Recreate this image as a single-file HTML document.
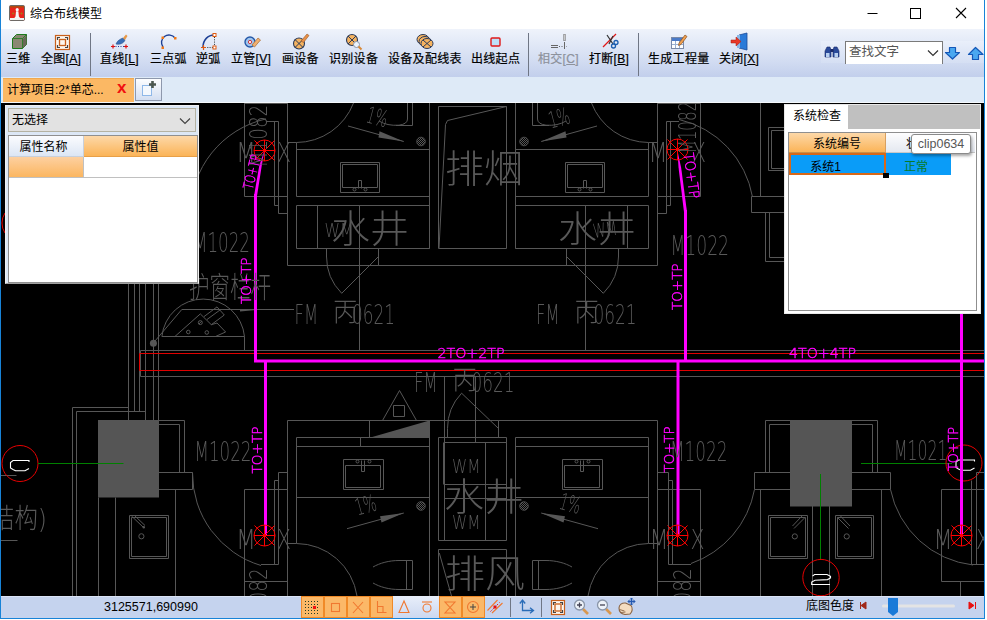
<!DOCTYPE html>
<html lang="zh-CN">
<head>
<meta charset="utf-8">
<title>综合布线模型</title>
<style>
html,body{margin:0;padding:0;background:#fff;}
body{width:987px;height:620px;position:relative;overflow:hidden;font-family:"Liberation Sans","Noto Sans CJK SC",sans-serif;font-size:12px;color:#000;}
.abs{position:absolute;}
#win{position:absolute;left:0;top:0;width:983px;height:618px;border-left:1px solid #1883d7;border-right:1px solid #1883d7;border-bottom:1px solid #1883d7;background:#fff;overflow:hidden;}
#title{position:absolute;left:0;top:0;width:983px;height:28px;background:#fff;}
#title .t{position:absolute;left:29px;top:6px;font-size:12px;line-height:16px;color:#000;}
#toolbar{position:absolute;left:0;top:29px;width:983px;height:48px;background:linear-gradient(#eff3fb 0%,#e2e9f7 30%,#d3ddf2 65%,#c2cfec 100%);}
.tb{position:absolute;top:52px;font-size:12px;line-height:14px;white-space:nowrap;color:#000;letter-spacing:.3px;-webkit-text-stroke:.2px currentColor;margin-left:-1px;}
.tb u{text-decoration:underline;}
.sep{position:absolute;top:33px;width:1px;height:43px;background:#6f7685;}
#tabs{position:absolute;left:0;top:77px;width:983px;height:26px;background:#deeaf7;box-shadow:inset 0 -1px 0 #f4f8fc;}
#canvas{position:absolute;left:0;top:103px;width:983px;height:493px;background:#000;overflow:hidden;}
#status{position:absolute;left:0;top:596px;width:983px;height:22px;background:#c5d3ee;box-shadow:inset 0 1px 0 #dbe4f7;}

.srch{position:absolute;left:820px;top:12px;width:163px;height:22px;background:linear-gradient(#e9effa,#d5dff3);}
.combo{position:absolute;left:844px;top:41px;width:96px;height:22px;border:1px solid #7a7a7a;border-bottom:none;background:#fff;}
.combo span{position:absolute;left:3px;top:2px;font-size:12.500px;line-height:16px;color:#555;}
.combo svg{position:absolute;right:3px;top:7px;}

.tab1{position:absolute;left:2px;top:1px;width:131px;height:24px;background:#fbb864;border-top:1px solid #f0a850;box-sizing:border-box;}
.tab1 span{position:absolute;left:4px;top:3px;font-size:12px;line-height:17px;white-space:nowrap;}
.tab1 b{position:absolute;left:114px;top:0px;font-size:17px;line-height:18px;color:#f01010;font-weight:bold;}
.tab2{position:absolute;left:134px;top:1px;width:27px;height:23px;box-sizing:border-box;border:1px solid #8e98ac;background:linear-gradient(#fdfeff,#d3def1);}
.tab2 svg{position:absolute;left:5px;top:2px;}
#prop{position:absolute;left:4px;top:105px;width:194px;height:179px;background:#dce7f5;box-sizing:border-box;border:1px solid #f0f0f0;border-bottom-color:#a0a0a0;}
.pcombo{position:absolute;left:2px;top:2px;width:188px;height:24px;box-sizing:border-box;border:1px solid #b4b2a2;background:#e2e2e2;}
.pcombo span{position:absolute;left:3px;top:3px;font-size:12px;line-height:16px;}
.pcombo svg{position:absolute;right:4px;top:8px;}
.pgrid{position:absolute;left:2px;top:29px;width:190px;height:148px;box-sizing:border-box;border:1px solid #8f8f8f;background:#fff;}
.ph1,.ph2,.pr1,.pr2{position:absolute;box-sizing:border-box;text-align:center;font-size:12px;line-height:23px;}
.ph1{left:0;top:0;width:75px;height:21px;text-indent:-5px;background:linear-gradient(#fbfcfe,#dce6f4);border-right:1px solid #c8d0dc;border-bottom:1px solid #c8d0dc;}
.ph2{left:75px;top:0;width:113px;height:21px;background:linear-gradient(#fdd8a8,#fbb458);border-bottom:1px solid #e8a048;}
.pr1{left:0;top:21px;width:75px;height:21px;background:linear-gradient(#fdd0a0,#fbb660);border-right:1px solid #c0c0c0;border-bottom:1px solid #c0c0c0;}
.pr2{left:75px;top:21px;width:113px;height:21px;background:#fff;border-bottom:1px solid #c0c0c0;}
#sys{position:absolute;left:783px;top:104px;width:197px;height:210px;background:#fff;box-sizing:border-box;border:1px solid #e8e8e8;}
.stab{position:absolute;left:0;top:0;width:63px;height:24px;background:#fff;font-size:12px;line-height:22px;text-indent:8px;}
#sys:before{content:"";position:absolute;left:63px;top:0;width:132px;height:24px;background:#c0c0c0;}
.sgrid{position:absolute;left:3px;top:27px;width:189px;height:179px;box-sizing:border-box;border:1px solid #8f8f8f;background:#fff;}
.sh1,.sh2,.sr1,.sr2{position:absolute;box-sizing:border-box;text-align:center;font-size:12px;line-height:22px;}
.sh1{left:0;top:0;width:97px;height:20px;background:linear-gradient(#fdd8a8,#fbb458);border-right:1px solid #d8a060;border-bottom:1px solid #c89048;}
.sh2{left:97px;top:0;width:89px;height:20px;background:linear-gradient(#fdfdfe,#e4e8f0);border-bottom:1px solid #c8c8c8;text-align:left;text-indent:20px;}
.sr1{left:0;top:20px;width:97px;height:22px;background:#0a9cf8;border:2px solid #d86818;line-height:24px;text-indent:-24px;}
.sr2{left:97px;top:20px;width:65px;height:22px;background:#0a9cf8;color:#0a7a28;line-height:28px;text-indent:-5px;}
.sdot{position:absolute;left:94px;top:40px;width:6px;height:5px;background:#000;}
.tip{position:absolute;left:126px;top:29px;width:60px;height:20px;box-sizing:border-box;border:1px solid #8a8a8a;border-radius:3px;background:#fff;font-size:12.500px;line-height:18px;text-align:center;color:#575757;box-shadow:1px 2px 3px rgba(0,0,0,.35);}

.coord{position:absolute;left:103px;top:3px;font-size:12.500px;line-height:16px;}
.dim{position:absolute;left:805px;top:2px;font-size:12px;line-height:16px;}
.ob{position:absolute;top:0;width:23px;height:22px;box-sizing:border-box;background:#fbb868;border:1px solid #f08a28;}
.hl{position:absolute;top:0;width:46px;height:22px;background:linear-gradient(#e8eefa,#ccd8f0);}

.ct{opacity:.999;}
.ct text{font-family:"DejaVu Sans","Noto Sans CJK SC",sans-serif;font-weight:200;fill:#5a5a5a;}
.mt text{font-family:"DejaVu Sans","Liberation Sans",sans-serif;font-weight:200;font-size:14px;fill:#ff00ff;stroke:#ff00ff;stroke-width:.45px;}
</style>
</head>
<body>
<div id="win">
  <div id="title"><div class="t">综合布线模型</div></div>

  <div id="toolbar">
    <div class="srch"></div>
  </div>
  <!-- toolbar labels -->
  <div class="tb" style="left:6px">三维</div>
  <div class="tb" style="left:41px">全图[<u>A</u>]</div>
  <div class="sep" style="left:89px"></div>
  <div class="tb" style="left:100px">直线[<u>L</u>]</div>
  <div class="tb" style="left:150px">三点弧</div>
  <div class="tb" style="left:196px">逆弧</div>
  <div class="tb" style="left:231px">立管[<u>V</u>]</div>
  <div class="tb" style="left:282px">画设备</div>
  <div class="tb" style="left:329px">识别设备</div>
  <div class="tb" style="left:388px">设备及配线表</div>
  <div class="tb" style="left:471px">出线起点</div>
  <div class="sep" style="left:527px"></div>
  <div class="tb" style="left:538px;color:#8d929c">相交[<u>C</u>]</div>
  <div class="tb" style="left:589px">打断[<u>B</u>]</div>
  <div class="sep" style="left:637px"></div>
  <div class="tb" style="left:648px">生成工程量</div>
  <div class="tb" style="left:719px">关闭[<u>X</u>]</div>
  <!-- ICONS -->
  <svg class="abs" style="left:0;top:0" width="984" height="78" viewBox="1 0 984 78">
    <!-- app icon -->
    <rect x="9.500" y="5.500" width="15" height="15" rx="1.300" fill="#e8241c" stroke="#6e6a66"/>
    <rect x="10" y="6" width="14" height="1.600" fill="#b04a10"/>
    <rect x="10" y="18" width="14" height="2" fill="#f2f2f2"/>
    <circle cx="17.200" cy="9.700" r="1.600" fill="#f6f6fa"/>
    <path d="M16 11.300h2.400l.5 5.200 1.200 1.500h-5.800l1.200-1.500z" fill="#f6f6fa"/>
    <path d="M12 13.500h2.400M13.200 12.300v2.400M20.300 13.500h2.400M21.500 12.300v2.400" stroke="#a8781c" stroke-width=".8"/>
    <!-- window controls -->
    <path d="M867.500 13.500h10" stroke="#000" fill="none"/>
    <rect x="910.500" y="8.500" width="10" height="10" stroke="#000" fill="none"/>
    <path d="M956 8l10 10M966 8l-10 10" stroke="#000" stroke-width="1.100" fill="none"/>
    <!-- 3D cube -->
    <path d="M12.500 38.500l4-4h10v10l-4 4h-10z" fill="#8a8873" stroke="#1c7a1c"/>
    <path d="M12.500 38.500h10v10M22.500 38.500l4-4" fill="none" stroke="#1c7a1c" stroke-width=".8"/>
    <path d="M23 39l3.500-3.500v9L23 48z" fill="#6a6858"/>
    <!-- full view -->
    <rect x="55.500" y="35.500" width="14" height="14" fill="#fdf6ee" stroke="#c8601c" stroke-width="1.200"/>
    <rect x="59.500" y="39.500" width="6" height="6" fill="none" stroke="#c8601c" stroke-width="1.300"/>
    <path d="M57.500 40v-2.500h2.500M65 37.500h2.500v2.500M67.500 45v2.500h-2.500M60 47.500h-2.500v-2.500" fill="none" stroke="#444" stroke-width="1.200"/>
    <!-- line -->
    <path d="M113 46.500h13" stroke="#2a3f9a" stroke-dasharray="1 1.500" fill="none"/>
    <path d="M111 46.500h4M113 44.500v4M124 46.500h4M126 44.500v4" stroke="#e01010" stroke-width="1.200" fill="none"/>
    <path d="M116 44c1-3 4-5 7-6l2 2c-1 3-5 5-9 4z" fill="#3a6fb8" stroke="#24508f" stroke-width=".6"/>
    <path d="M123 38l3-3.500 1.500 1.500-2.500 4z" fill="#e89a4a"/>
    <!-- 3pt arc -->
    <path d="M163 47a7.500 7.500 0 0 1 12-9" fill="none" stroke="#1c3f94" stroke-width="1.400"/>
    <rect x="174" y="37" width="2.500" height="2.500" fill="#f07818"/><rect x="161.500" y="36.500" width="2.500" height="2.500" fill="#f07818"/><rect x="161.500" y="46.500" width="2.500" height="2.500" fill="#f07818"/>
    <!-- reverse arc -->
    <path d="M203 47c0-7 5-12 11-12" fill="none" stroke="#1c3f94" stroke-width="1.500"/>
    <path d="M214.500 37v9M205 47.500h8" stroke="#333" stroke-dasharray="1 1.300" fill="none"/>
    <rect x="213" y="33.500" width="3" height="3" fill="#fff" stroke="#e05a10"/><rect x="213" y="46" width="3" height="3" fill="#fff" stroke="#e05a10"/>
    <path d="M201 47.500h5M203.500 45v5" stroke="#e05a10" stroke-width="1.200" fill="none"/>
    <!-- riser -->
    <circle cx="250" cy="42" r="5" fill="#9fc4ee" stroke="#2458a8" stroke-width="1.400"/>
    <circle cx="250" cy="42" r="1.600" fill="#fff" stroke="#d02020" stroke-width=".9"/>
    <path d="M252 45l6-7 2.500 2-6 7z" fill="#f0b070" stroke="#a86a30" stroke-width=".7"/>
    <!-- draw device -->
    <circle cx="299" cy="43.500" r="5.500" fill="#f5b360" stroke="#2a3a5a" stroke-width="1.100"/>
    <path d="M295 39.500l8 8M303 39.500l-8 8" stroke="#2a3a5a" stroke-width="1"/>
    <path d="M301 41l6-7 2 1.500-5.500 7z" fill="#e89048" stroke="#9a5a28" stroke-width=".6"/>
    <!-- identify device -->
    <circle cx="352" cy="40" r="5.500" fill="#f5b360" stroke="#2a3a5a" stroke-width="1.100"/>
    <path d="M348 36l8 8M356 36l-8 8" stroke="#2a3a5a" stroke-width="1"/>
    <circle cx="356.500" cy="44.500" r="3" fill="#eef4fb" stroke="#8a96a8" stroke-width="1"/>
    <path d="M358.500 46.500l3 3" stroke="#d88a38" stroke-width="2"/>
    <!-- device table -->
    <ellipse cx="423" cy="39.500" rx="6" ry="5" fill="#f5b360" stroke="#2a3a5a"/>
    <ellipse cx="425" cy="41.500" rx="6" ry="5" fill="#f5b360" stroke="#2a3a5a"/>
    <ellipse cx="427" cy="43.500" rx="6" ry="5" fill="#f5b360" stroke="#2a3a5a"/>
    <path d="M423 40l8 7M431 40l-8 7" stroke="#2a3a5a" stroke-width="1"/>
    <!-- outlet start -->
    <rect x="491" y="38" width="9" height="8" rx="1" fill="#bfe0f8" stroke="#e01818" stroke-width="1.400"/>
    <!-- intersect (disabled) -->
    <path d="M564.500 34v7" stroke="#777" stroke-width="2.200"/><path d="M564.500 34.500v6" stroke="#ddd" stroke-width=".8"/>
    <path d="M564.500 42v7M551 45.500h7M551 47.500h7" stroke="#666" stroke-width="1" fill="none"/>
    <path d="M559 46.500h8" stroke="#666" stroke-dasharray="1 1.500"/>
    <!-- break -->
    <path d="M603 47l13-13" stroke="#e01818" stroke-width="1.300"/>
    <path d="M607 35l6 9M613 36l-4 8" stroke="#333" stroke-width="1.200"/>
    <circle cx="613.500" cy="46" r="2" fill="none" stroke="#1c5fb0" stroke-width="1.300"/><circle cx="616" cy="42.500" r="2" fill="none" stroke="#1c5fb0" stroke-width="1.300"/>
    <!-- generate qty -->
    <rect x="671.500" y="37.500" width="12" height="11" fill="#fff" stroke="#7a8aa8"/>
    <rect x="672" y="38" width="11" height="3" fill="#4a7ac8"/>
    <path d="M672 44.500h11M675.500 41v7M679.500 41v7" stroke="#9ab0d0" stroke-width="1"/>
    <path d="M679 43l6-8 2 1.500-6 8-2.500 1z" fill="#f0a050" stroke="#8a5020" stroke-width=".7"/>
    <!-- close -->
    <path d="M739 35l8-2v17l-8-2z" fill="#2a7ad8" stroke="#1a4a98" stroke-width=".8"/>
    <rect x="737" y="35" width="3" height="13" fill="#8ab8e8"/>
    <path d="M731 40h5v-3l5 4.500-5 4.500v-3h-5z" fill="#e83828" stroke="#a81808" stroke-width=".5"/>
    <!-- binoculars -->
    <path d="M825 57v-6l2-4h3l1 3v7zM833 57v-7l1-3h3l2 4v6z" fill="#2a4a9a" stroke="#1a2a6a" stroke-width=".6"/>
    <rect x="826" y="53" width="3.500" height="4" fill="#b8d0f0"/><rect x="834.500" y="53" width="3.500" height="4" fill="#b8d0f0"/>
    <rect x="830.500" y="49" width="3" height="3" fill="#1a2a6a"/>
    <!-- arrows -->
    <path d="M949.500 47.500h6v5h4l-7 6.500-7-6.500h4z" fill="#4aa8f0" stroke="#1458b8" stroke-width="1.200" stroke-linejoin="round"/>
    <path d="M972.500 59.500h6v-5h4.500l-7.500-7-7 7h4z" fill="#4aa8f0" stroke="#1458b8" stroke-width="1.200" stroke-linejoin="round"/>
  </svg>
  <div class="combo"><span>查找文字</span><svg width="12" height="8" viewBox="0 0 12 8"><path d="M1 1.500l5 5 5-5" fill="none" stroke="#333" stroke-width="1.200"/></svg></div>
  <div id="tabs">
    <div class="tab1"><span>计算项目:2*单芯...</span><b>x</b></div>
    <div class="tab2"><svg width="16" height="16" viewBox="0 0 16 16"><rect x="1.500" y="4.500" width="9" height="10" fill="#f4f8fd" stroke="#8fb8e8"/><path d="M8 3.500h7M11.500 0v7" stroke="#4d5850" stroke-width="2.600"/></svg></div>
  </div>
  <div id="canvas">
<svg class="abs" style="left:0;top:0" width="983" height="493" viewBox="1 103 983 493">
<!--CAD-BEGIN-->
<defs><pattern id="hat" width="2" height="2" patternUnits="userSpaceOnUse"><rect width="1" height="1" fill="#575757"/><rect x="1" y="1" width="1" height="1" fill="#575757"/></pattern></defs>
<path d="M984 350.500H140.500V376.500H984" stroke="#575757" stroke-width="1" fill="none"/>
<path d="M244.500 103.500H287.500M244.500 103V196.500H287.500M287.500 103V265.500H657.500V103" stroke="#575757" stroke-width="1" fill="none"/>
<path d="M266 121.500H278.500V213.500H287.500M274.500 121.500V205.500H278.500" stroke="#575757" stroke-width="1" fill="none"/>
<path d="M287.500 142.500H296.500V196.500" stroke="#575757" stroke-width="1" fill="none"/>
<path d="M296.500 149.500H429.500M296.500 196.500H429.500M429.500 103V248.500" stroke="#575757" stroke-width="1" fill="none"/>
<path d="M296.5 205.5H429.5V248.5H296.5Z" stroke="#575757" stroke-width="1" fill="none"/>
<path d="M317.500 205.500V248.500M359.500 205.500V350.500" stroke="#575757" stroke-width="1" fill="none"/>
<path d="M326.500 248.500V257M378.500 248.500V265.500M378.500 256.500L341.700 293.300" stroke="#575757" stroke-width="1" fill="none"/>
<path d="M326.500 256.500A52 52 0 0 0 341.700 293.300" stroke="#575757" stroke-width="1" fill="none"/>
<path d="M438.5 106.5H506.5V248.5H438.5Z" stroke="#575757" stroke-width="1" fill="none"/>
<path d="M506.500 106.500L447.500 120.500L445.500 124.500L439 248" stroke="#575757" stroke-width="1" fill="none"/>
<path d="M515.500 103V248.500M515.500 149.500H648.500M515.500 196.500H648.500M648.500 142.500V196.500M648.500 142.500H657.500" stroke="#575757" stroke-width="1" fill="none"/>
<path d="M515.5 205.5H648.5V248.5H515.5Z" stroke="#575757" stroke-width="1" fill="none"/>
<path d="M627.500 205.500V248.500M585.500 205.500V350.500" stroke="#575757" stroke-width="1" fill="none"/>
<path d="M618.500 248.500V257M566.500 248.500V265.500M566.500 256.500L603.300 293.300" stroke="#575757" stroke-width="1" fill="none"/>
<path d="M618.500 256.500A52 52 0 0 1 603.300 293.300" stroke="#575757" stroke-width="1" fill="none"/>
<path d="M657.500 103.500H700.500M700.500 103V196.500H657.500" stroke="#575757" stroke-width="1" fill="none"/>
<path d="M679 121.500H666.500V213.500H657.500M670.500 121.500V205.500H666.500" stroke="#575757" stroke-width="1" fill="none"/>
<path d="M353.500 103A61.500 61.500 0 0 1 296.500 142.500" stroke="#575757" stroke-width="1" fill="none"/>
<path d="M591.500 103A61.500 61.500 0 0 0 648.500 142.500" stroke="#575757" stroke-width="1" fill="none"/>
<path d="M190.500 213.500A97 97 0 0 1 266 118.900" stroke="#575757" stroke-width="1" fill="none"/>
<path d="M679 119.500A96.500 96.500 0 0 1 752.500 197" stroke="#575757" stroke-width="1" fill="none"/>
<path d="M760.500 103V196.500M751.500 196.500H784M751.500 196.500V212.500H784" stroke="#575757" stroke-width="1" fill="none"/>
<path d="M765.500 212.500V261.500H784M769.500 212.500V257.500H784" stroke="#575757" stroke-width="1" fill="none"/>
<path d="M784 127.500H768.500V170.500H784M784 130.500H771.500V168.500H784" stroke="#575757" stroke-width="1" fill="none"/>
<path d="M340.5 162.5H379.5V192.5H340.5Z" stroke="#575757" stroke-width="1" fill="none"/>
<path d="M342.5 164.5H377.5V187.5H342.5Z" stroke="#575757" stroke-width="1" fill="none"/>
<path d="M358.5 188.5V180.5H361.5V188.5" stroke="#575757" stroke-width="1" fill="none"/>
<circle cx="354.5" cy="189.5" r="1.500" stroke="#575757" fill="none"/><circle cx="365.5" cy="189.5" r="1.500" stroke="#575757" fill="none"/>
<path d="M565.5 162.5H604.5V192.5H565.5Z" stroke="#575757" stroke-width="1" fill="none"/>
<path d="M567.5 164.5H602.5V187.5H567.5Z" stroke="#575757" stroke-width="1" fill="none"/>
<path d="M583.5 188.5V180.5H586.5V188.5" stroke="#575757" stroke-width="1" fill="none"/>
<circle cx="579.5" cy="189.5" r="1.500" stroke="#575757" fill="none"/><circle cx="590.5" cy="189.5" r="1.500" stroke="#575757" fill="none"/>
<path d="M343.5 459.5H383.5V489.5H343.5Z" stroke="#575757" stroke-width="1" fill="none"/>
<path d="M345.5 465.5H380.5V487.5H345.5Z" stroke="#575757" stroke-width="1" fill="none"/>
<path d="M361.5 460.5V471.5H364.5V460.5" stroke="#575757" stroke-width="1" fill="none"/>
<circle cx="357.5" cy="461.5" r="1.500" stroke="#575757" fill="none"/><circle cx="369.5" cy="461.5" r="1.500" stroke="#575757" fill="none"/>
<path d="M562.5 459.5H602.5V489.5H562.5Z" stroke="#575757" stroke-width="1" fill="none"/>
<path d="M564.5 465.5H599.5V487.5H564.5Z" stroke="#575757" stroke-width="1" fill="none"/>
<path d="M580.5 460.5V471.5H583.5V460.5" stroke="#575757" stroke-width="1" fill="none"/>
<circle cx="576.5" cy="461.5" r="1.500" stroke="#575757" fill="none"/><circle cx="588.5" cy="461.5" r="1.500" stroke="#575757" fill="none"/>
<circle cx="421" cy="141.5" r="4.300" fill="url(#hat)" stroke="#575757" stroke-width=".8"/>
<circle cx="524" cy="141.5" r="4.300" fill="url(#hat)" stroke="#575757" stroke-width=".8"/>
<circle cx="421" cy="506" r="4.300" fill="url(#hat)" stroke="#575757" stroke-width=".8"/>
<circle cx="524" cy="506" r="4.300" fill="url(#hat)" stroke="#575757" stroke-width=".8"/>
<path d="M348 126L403.800 141.500" stroke="#575757" stroke-width="1" fill="none"/>
<path d="M403.800 141.500L379.500 131.300L378.500 137.500Z" fill="#575757"/>
<path d="M597 126L541.200 141.500" stroke="#575757" stroke-width="1" fill="none"/>
<path d="M541.200 141.500L565.500 131.300L566.500 137.500Z" fill="#575757"/>
<path d="M347 528.700L403.800 513" stroke="#575757" stroke-width="1" fill="none"/>
<path d="M403.800 513L380 516.300L381.500 522.600Z" fill="#575757"/>
<path d="M598 528.700L541.200 513" stroke="#575757" stroke-width="1" fill="none"/>
<path d="M541.200 513L565 516.300L563.500 522.600Z" fill="#575757"/>
<path d="M412.500 103V125.500H396M407.500 103V119Q407.500 124 399 125.200Q387 126 379 121" stroke="#575757" stroke-width="1" fill="none"/>
<path d="M532.500 103V125.500H549M537.500 103V119Q537.500 124 546 125.200Q558 126 566 121" stroke="#575757" stroke-width="1" fill="none"/>
<path d="M406.500 560.500V589.500M373 567C380 563 389 560.500 399 560.500H412.500V589.500H399C389 589.500 380 587 373 583" stroke="#575757" stroke-width="1" fill="none"/>
<path d="M538.500 560.500V589.500M572 567C565 563 556 560.500 546 560.500H532.500V589.500H546C556 589.500 565 587 572 583" stroke="#575757" stroke-width="1" fill="none"/>
<path d="M161.900 336.500A41.500 41.500 0 0 1 244.500 336.500V350.500M161.900 336.500H244.500" stroke="#575757" stroke-width="1" fill="none"/>
<path d="M153.300 343L181.800 309.500H294" stroke="#575757" stroke-width="1" fill="none"/>
<path d="M266 309L240 311.500V309.500Z" fill="#575757"/>
<circle cx="153.400" cy="343.200" r="3.500" fill="#575757"/>
<path d="M174.900 336.500L200.300 313.900L211.300 324.700L217 323L225.600 332L215.500 336.500" stroke="#575757" stroke-width="1" fill="none"/>
<path d="M204 316.600L217 306.900L224.300 315L211.300 324.700M207 319.500L220 310" stroke="#575757" stroke-width="1" fill="none"/>
<circle cx="200.300" cy="322.600" r="2" stroke="#575757" fill="none"/><path d="M198.800 324.100l3-3" stroke="#575757"/><circle cx="188.300" cy="332" r="1.800" stroke="#575757" fill="none"/><circle cx="206.800" cy="332.500" r="1.800" stroke="#575757" fill="none"/>
<path d="M128.500 284V420.500M134.500 284V411.500M139.500 284V411.500M145.500 284V420.500M153.500 284V420.500M158.500 284V420.500" stroke="#575757" stroke-width="1" fill="none"/>
<path d="M72.500 596V407.500H128.500M76.500 596V411.500H145.500" stroke="#575757" stroke-width="1" fill="none"/>
<rect x="98" y="420" width="61" height="77.500" fill="#555"/>
<path d="M158.500 420.500H184.500V472.500M158.500 424.500H179.500V472.500M158.500 472.500H192.500V489.500H158.500" stroke="#575757" stroke-width="1" fill="none"/>
<path d="M175.500 489.500V596M98.500 497.500V596M115.500 497.500V596" stroke="#575757" stroke-width="1" fill="none"/>
<path d="M129.5 515.5H168.5V558.5H129.5Z" stroke="#575757" stroke-width="1" fill="none"/>
<path d="M131.5 517.5H166.5V556.5H131.5Z" stroke="#575757" stroke-width="1" fill="none"/>
<path d="M131.500 516L143.500 527.500M134.500 515.500L145 525.500" stroke="#575757" stroke-width="1" fill="none"/>
<circle cx="141.400" cy="536.300" r="2.600" stroke="#575757" fill="none"/><circle cx="143.800" cy="527.300" r="1.200" fill="#575757"/>
<path d="M1 475.500H16.500M1 540.500H17.500" stroke="#575757" stroke-width="1" fill="none"/>
<circle cx="20" cy="463.500" r="18" stroke="#e60000" fill="none"/>
<path d="M29 462V460.500H13L10.500 462.500V468L13 469.500L15.500 470.800H25L29 468.500" stroke="#fff" stroke-width="1.1" fill="none"/>
<path d="M38 463.500H123.500" stroke="#008000" stroke-width="1" fill="none"/>
<path d="M5 213A18 18 0 0 0 5 233" stroke="#e60000" fill="none"/>
<path d="M287.500 420.500H657.500M287.500 420.500V596M657.500 420.500V596" stroke="#575757" stroke-width="1" fill="none"/>
<path d="M296.500 543.500V437.500H429.500M296.500 446.500H429.500M296.500 497.500H429.500M429.500 420.500V596" stroke="#575757" stroke-width="1" fill="none"/>
<path d="M369.500 420.500V437.500M360.500 437.500V446.500" stroke="#575757" stroke-width="1" fill="none"/>
<path d="M370.500 437.500L429.500 420.500V437.500Z" fill="#555"/>
<path d="M287.500 543.500H296.500A61.500 61.500 0 0 1 357 596" stroke="#575757" stroke-width="1" fill="none"/>
<path d="M515.500 596V437.500H648.500V543.500H657.500M515.500 446.500H648.500M515.500 497.500H648.500" stroke="#575757" stroke-width="1" fill="none"/>
<path d="M648.500 543.500A61.500 61.500 0 0 0 588 596" stroke="#575757" stroke-width="1" fill="none"/>
<path d="M438.500 437.500H506.500V540.500H438.500Z" stroke="#575757" stroke-width="1" fill="none"/>
<path d="M444.500 376.500V540.500M443.500 442.500V484.500M444.500 442.500H506.500M485.500 442.500V540.500M444.500 484.500H506.500M444.500 498.500H506.500M475.500 376.500V442.500" stroke="#575757" stroke-width="1" fill="none"/>
<path d="M498.500 420.500V437.500M498.500 428.500L461.600 393.200A51 51 0 0 0 447.500 428.500V437.500" stroke="#575757" stroke-width="1" fill="none"/>
<path d="M399.500 390.500L382.500 420.500M399.500 390.500L416.500 420.500" stroke="#575757" stroke-width="1" fill="none"/>
<path d="M393.5 405.5H404.5V416.5H393.5Z" stroke="#575757" stroke-width="1" fill="none"/>
<path d="M438.500 596V549.500H506.500V596M439.300 553L451.500 596" stroke="#575757" stroke-width="1" fill="none"/>
<path d="M244.500 596V489.500H287.500M244.500 581.500H287.500" stroke="#575757" stroke-width="1" fill="none"/>
<path d="M287.500 472.500H278.500V564.500H261M278.500 480.500H274.500V564.500" stroke="#575757" stroke-width="1" fill="none"/>
<path d="M700.500 596V489.500H657.500M700.500 581.500H657.500" stroke="#575757" stroke-width="1" fill="none"/>
<path d="M657.500 472.500H668.500V564.500H691M668.500 480.500H672.500V564.500" stroke="#575757" stroke-width="1" fill="none"/>
<path d="M192.500 472.500A96 96 0 0 0 261 565.500" stroke="#575757" stroke-width="1" fill="none"/>
<path d="M754.500 489.500A97 97 0 0 1 691 563.500" stroke="#575757" stroke-width="1" fill="none"/>
<path d="M765.5 420.5H877.5V472.5H765.5Z" stroke="#575757" stroke-width="1" fill="none"/>
<path d="M769.500 472.500V424.500H872.500V472.500" stroke="#575757" stroke-width="1" fill="none"/>
<path d="M754.5 472.5H890.5V489.5H754.5Z" stroke="#575757" stroke-width="1" fill="none"/>
<path d="M760.500 489.500V596M881.500 489.500V596M812.500 506V596M829.500 506V596" stroke="#575757" stroke-width="1" fill="none"/>
<rect x="790" y="420" width="62" height="86.500" fill="#555"/>
<path d="M768.5 515.5H807.5V558.5H768.5Z" stroke="#575757" stroke-width="1" fill="none"/>
<path d="M770.5 517.5H805.5V556.5H770.5Z" stroke="#575757" stroke-width="1" fill="none"/>
<path d="M835.5 515.5H873.5V558.5H835.5Z" stroke="#575757" stroke-width="1" fill="none"/>
<path d="M837.5 517.5H871.5V556.5H837.5Z" stroke="#575757" stroke-width="1" fill="none"/>
<path d="M805 517.500L794 528.500M802 516L792.500 526" stroke="#575757" stroke-width="1" fill="none"/>
<circle cx="794.800" cy="536.400" r="2.600" stroke="#575757" fill="none"/>
<path d="M837.500 517.500L848.500 528.500M840.500 516L850 526" stroke="#575757" stroke-width="1" fill="none"/>
<circle cx="846.700" cy="536.400" r="2.600" stroke="#575757" fill="none"/>
<path d="M890.500 489.500A95 95 0 0 0 973 565" stroke="#575757" stroke-width="1" fill="none"/>
<path d="M861 463.500H952" stroke="#008000" stroke-width="1" fill="none"/>
<path d="M820.500 474V560" stroke="#008000" stroke-width="1" fill="none"/>
<circle cx="821" cy="577.600" r="18.200" stroke="#e60000" fill="none"/>
<path d="M812.500 576.200L814.500 574.500H827L830.500 576.300V578L827.500 579.600L815 580.200L811.700 582V584.500H830" stroke="#fff" stroke-width="1.1" fill="none"/>
<circle cx="964" cy="463" r="18" stroke="#e60000" fill="none"/>
<path d="M974.500 461.500V460H958.500L956 462V467.500L958.500 469L961 470.300H970.500L974.500 468" stroke="#fff" stroke-width="1.1" fill="none"/>
<path d="M984 489.500H941.500V581.500H984M960.500 581.500V596" stroke="#575757" stroke-width="1" fill="none"/>
<path d="M984 472.500H976.500V564.500M971.500 480.500V564.500H984" stroke="#575757" stroke-width="1" fill="none"/>
<path d="M984 353.500H139.500V370.500H984" stroke="#e00000" stroke-width="1" fill="none"/>
<path d="M264.500 150L261.700 166L257 196H254L259.200 166Z" fill="#ff00ff"/>
<path d="M255.500 194V361H984" stroke="#ff00ff" stroke-width="3" fill="none"/>
<path d="M265.500 361V535" stroke="#ff00ff" stroke-width="3" fill="none"/>
<path d="M677.300 150L681.200 168L687 212H684L678.600 168Z" fill="#ff00ff"/>
<path d="M685.500 210V361" stroke="#ff00ff" stroke-width="3" fill="none"/>
<path d="M678 361V535" stroke="#ff00ff" stroke-width="3" fill="none"/>
<path d="M961.500 314V535" stroke="#ff00ff" stroke-width="3" fill="none"/>
<g stroke="#ff0000" fill="none"><circle cx="264.5" cy="150.5" r="10.5"/><path d="M254.0 150.5H275.0M264.5 140.0V161.0M254.5 140.5L274.5 160.5M274.5 140.5L254.5 160.5"/></g>
<g stroke="#ff0000" fill="none"><circle cx="677.5" cy="149.5" r="10.5"/><path d="M667.0 149.5H688.0M677.5 139.0V160.0M667.5 139.5L687.5 159.5M687.5 139.5L667.5 159.5"/></g>
<g stroke="#ff0000" fill="none"><circle cx="264.5" cy="535.5" r="10.5"/><path d="M254.0 535.5H275.0M264.5 525.0V546.0M254.5 525.5L274.5 545.5M274.5 525.5L254.5 545.5"/></g>
<g stroke="#ff0000" fill="none"><circle cx="677.5" cy="535.5" r="10.5"/><path d="M667.0 535.5H688.0M677.5 525.0V546.0M667.5 525.5L687.5 545.5M687.5 525.5L667.5 545.5"/></g>
<g stroke="#ff0000" fill="none"><circle cx="961.5" cy="535.5" r="10.5"/><path d="M951.0 535.5H972.0M961.5 525.0V546.0M951.5 525.5L971.5 545.5M971.5 525.5L951.5 545.5"/></g>
<g class="ct">
<text x="193" y="251.500" font-size="26.500" textLength="57" lengthAdjust="spacingAndGlyphs">M1022</text>
<text x="670.500" y="255" font-size="26.500" textLength="58.500" lengthAdjust="spacingAndGlyphs">M1022</text>
<text x="194.500" y="461" font-size="26.500" textLength="57" lengthAdjust="spacingAndGlyphs">M1022</text>
<text x="670" y="461" font-size="26.500" textLength="57.500" lengthAdjust="spacingAndGlyphs">M1022</text>
<text x="894" y="459.700" font-size="26.500" textLength="53.500" lengthAdjust="spacingAndGlyphs">M1021</text>
<text x="294.5" y="323.5" font-size="26.500" textLength="23.500" lengthAdjust="spacingAndGlyphs">FM</text><text x="333.0" y="320.5" font-size="26" textLength="24.500" lengthAdjust="spacingAndGlyphs">丙</text><text x="352.0" y="323.5" font-size="26.500" textLength="43" lengthAdjust="spacingAndGlyphs">0621</text>
<text x="536" y="323.5" font-size="26.500" textLength="23.500" lengthAdjust="spacingAndGlyphs">FM</text><text x="574.5" y="320.5" font-size="26" textLength="24.500" lengthAdjust="spacingAndGlyphs">丙</text><text x="593.5" y="323.5" font-size="26.500" textLength="43" lengthAdjust="spacingAndGlyphs">0621</text>
<text x="414" y="392.2" font-size="26.500" textLength="23.500" lengthAdjust="spacingAndGlyphs">FM</text><text x="452.5" y="389.2" font-size="26" textLength="24.500" lengthAdjust="spacingAndGlyphs">丙</text><text x="471.5" y="392.2" font-size="26.500" textLength="43" lengthAdjust="spacingAndGlyphs">0621</text>
<text x="189" y="298" font-size="29" textLength="82" lengthAdjust="spacingAndGlyphs">护窗栏杆</text>
<text x="445" y="182" font-size="38" textLength="78" lengthAdjust="spacingAndGlyphs">排烟</text>
<text x="445" y="587" font-size="38" textLength="80" lengthAdjust="spacingAndGlyphs">排风</text>
<text x="331" y="242" font-size="38" textLength="78" lengthAdjust="spacingAndGlyphs">水井</text>
<text x="324.500" y="236.500" font-size="19.500" textLength="29" lengthAdjust="spacingAndGlyphs">WM</text>
<text x="558" y="242" font-size="36" textLength="78" lengthAdjust="spacingAndGlyphs">水井</text>
<text x="594" y="238" font-size="19.500" textLength="24" lengthAdjust="spacingAndGlyphs" transform="rotate(-8 594 238)">WM</text>
<text x="452" y="472.800" font-size="19.500" textLength="28.500" lengthAdjust="spacingAndGlyphs">WM</text>
<text x="452" y="528.700" font-size="19.500" textLength="28.500" lengthAdjust="spacingAndGlyphs">WM</text>
<text x="444" y="510" font-size="38" textLength="80" lengthAdjust="spacingAndGlyphs">水井</text>
<text x="-9" y="528" font-size="27" textLength="56" lengthAdjust="spacingAndGlyphs">结构)</text>
<text x="236" y="162" font-size="26.500" textLength="20" lengthAdjust="spacingAndGlyphs">M</text><text x="277" y="162" font-size="26.500" textLength="14" lengthAdjust="spacingAndGlyphs">X</text>
<text x="648.500" y="162" font-size="26.500" textLength="19" lengthAdjust="spacingAndGlyphs">M</text><text x="692" y="162" font-size="26.500" textLength="14" lengthAdjust="spacingAndGlyphs">X</text>
<text x="236" y="548.500" font-size="26.500" textLength="20" lengthAdjust="spacingAndGlyphs">M</text><text x="277" y="548.500" font-size="26.500" textLength="14" lengthAdjust="spacingAndGlyphs">X</text>
<text x="649.500" y="548.500" font-size="26.500" textLength="19" lengthAdjust="spacingAndGlyphs">M</text><text x="690.500" y="548.500" font-size="26.500" textLength="14" lengthAdjust="spacingAndGlyphs">X</text>
<text x="933.500" y="548.500" font-size="26.500" textLength="19" lengthAdjust="spacingAndGlyphs">M</text><text x="976" y="548.500" font-size="26.500" textLength="14" lengthAdjust="spacingAndGlyphs">X</text>
<text transform="translate(267 167.400) rotate(-90)" font-size="24" textLength="62.700" lengthAdjust="spacingAndGlyphs">M1082</text>
<text transform="translate(695.500 153.500) rotate(-90)" font-size="24" textLength="52" lengthAdjust="spacingAndGlyphs">M1082</text>
<text transform="translate(267 631) rotate(-90)" font-size="24" textLength="62.700" lengthAdjust="spacingAndGlyphs">M1082</text>
<text transform="translate(691 631) rotate(-90)" font-size="24" textLength="62.700" lengthAdjust="spacingAndGlyphs">M1082</text>
<text transform="translate(365 122) rotate(15)" font-size="23" textLength="21" lengthAdjust="spacingAndGlyphs">1%</text>
<text transform="translate(551 128.500) rotate(-15)" font-size="23" textLength="21" lengthAdjust="spacingAndGlyphs">1%</text>
<text transform="translate(357.500 515.500) rotate(-15)" font-size="23" textLength="21" lengthAdjust="spacingAndGlyphs">1%</text>
<text transform="translate(558 508.500) rotate(15)" font-size="23" textLength="21" lengthAdjust="spacingAndGlyphs">1%</text>
</g>
<g class="mt">
<text x="437.500" y="358" textLength="67" lengthAdjust="spacingAndGlyphs">2TO+2TP</text>
<text x="789" y="357.700" textLength="67" lengthAdjust="spacingAndGlyphs">4TO+4TP</text>
<text transform="translate(250.700 304) rotate(-90)" textLength="46.500" lengthAdjust="spacingAndGlyphs">TO+TP</text>
<text transform="translate(682 310) rotate(-90)" textLength="46.500" lengthAdjust="spacingAndGlyphs">TO+TP</text>
<text transform="translate(261.500 473.500) rotate(-90)" textLength="47" lengthAdjust="spacingAndGlyphs">TO+TP</text>
<text transform="translate(674 472.500) rotate(-90)" textLength="46" lengthAdjust="spacingAndGlyphs">TO+TP</text>
<text transform="translate(958 471) rotate(-90)" textLength="44" lengthAdjust="spacingAndGlyphs">TO+TP</text>
<text transform="translate(252.500 190) rotate(-76)" textLength="35" lengthAdjust="spacingAndGlyphs">TO+TP</text>
<text transform="translate(683.500 153.500) rotate(82)" textLength="46" lengthAdjust="spacingAndGlyphs">TO+TP</text>
</g>

<!--CAD-END-->
</svg>
</div>

  <!-- property panel -->
  <div id="prop">
    <div class="pcombo"><span>无选择</span><svg width="12" height="8" viewBox="0 0 12 8"><path d="M1 1.500l5 5 5-5" fill="none" stroke="#444" stroke-width="1.200"/></svg></div>
    <div class="pgrid">
      <div class="ph1">属性名称</div><div class="ph2">属性值</div>
      <div class="pr1"></div><div class="pr2"></div>
    </div>
  </div>
  <!-- system check panel -->
  <div id="sys">
    <div class="stab">系统检查</div>
    <div class="sgrid">
      <div class="sh1">系统编号</div><div class="sh2">状态</div>
      <div class="sr1">系统1</div><div class="sr2">正常</div>
      <div class="sdot"></div>
    </div>
    <div class="tip">clip0634</div>
  </div>
  <div id="status">
    <div class="coord">3125571,690990</div>
    <div class="ob" style="left:300px"></div><div class="ob" style="left:323px"></div><div class="ob" style="left:346px"></div><div class="ob" style="left:369px"></div>
    <div class="ob" style="left:438px"></div><div class="ob" style="left:461px"></div>
    <div class="hl" style="left:392px"></div>
    <div class="dim">底图色度</div>
    <svg class="abs" style="left:0;top:0" width="984" height="22" viewBox="1 596 984 22">
      <!-- grid dots -->
      <g fill="#243c24" shape-rendering="crispEdges"><rect x="305" y="601" width="1" height="1"/><rect x="308" y="601" width="1" height="1"/><rect x="311" y="601" width="1" height="1"/><rect x="314" y="601" width="1" height="1"/><rect x="317" y="601" width="1" height="1"/><rect x="305" y="604" width="1" height="1"/><rect x="308" y="604" width="1" height="1"/><rect x="311" y="604" width="1" height="1"/><rect x="314" y="604" width="1" height="1"/><rect x="317" y="604" width="1" height="1"/><rect x="305" y="607" width="1" height="1"/><rect x="308" y="607" width="1" height="1"/><rect x="311" y="607" width="1" height="1"/><rect x="317" y="607" width="1" height="1"/><rect x="305" y="610" width="1" height="1"/><rect x="308" y="610" width="1" height="1"/><rect x="311" y="610" width="1" height="1"/><rect x="314" y="610" width="1" height="1"/><rect x="317" y="610" width="1" height="1"/><rect x="305" y="613" width="1" height="1"/><rect x="308" y="613" width="1" height="1"/><rect x="311" y="613" width="1" height="1"/><rect x="314" y="613" width="1" height="1"/><rect x="317" y="613" width="1" height="1"/></g>
      <rect x="313" y="606" width="3" height="3" fill="#f01010"/>
      <g fill="none" stroke="#f07830" stroke-width="1.100">
        <rect x="331.500" y="603.500" width="8" height="8"/>
        <path d="M353 602l10 11M363 602l-10 11"/>
        <path d="M377.500 601v11.500h9M377.500 606.500h5.500v6"/>
        <path d="M404 601l-5 11.500h10z"/>
        <circle cx="427" cy="608" r="4"/><path d="M422 602h10"/>
        <path d="M445 602h10l-10 11h10z"/>
        <circle cx="473" cy="607" r="5.500"/>
        <path d="M487.500 610.500l10-10.500M492 613l10.500-10"/>
      </g>
      <path d="M470 607h6M473 604v6" stroke="#444" stroke-width="1"/>
      <path d="M490.500 611.500l9-9" stroke="#e81010" stroke-dasharray="1.500 1.500" stroke-width="1"/><rect x="493.500" y="605.500" width="3" height="3" fill="#e81010"/>
      <path d="M510.500 598v19M541.500 598v19" stroke="#6f7685"/>
      <path d="M522.500 600.500v10h10.500M519.800 603.500l2.700-3.500 2.700 3.500M530 607.800l3.500 2.700-3.500 2.700" fill="none" stroke="#2a6cb8" stroke-width="1.300"/>
      <rect x="551.500" y="600.500" width="13" height="14" fill="#fdf6ee" stroke="#c8601c" stroke-width="1.200"/>
      <rect x="555" y="604" width="6" height="7" fill="none" stroke="#c8601c" stroke-width="1.300"/>
      <path d="M553.500 605v-2.500h2.500M560 602.500h2.500v2.500M562.500 610v2.500h-2.500M556 612.500h-2.500v-2.500" fill="none" stroke="#444" stroke-width="1.200"/>
      <path d="M583 609l5 5" stroke="#d89850" stroke-width="2.600"/><circle cx="579.500" cy="605" r="5" fill="#eef3f9" stroke="#8a96a8" stroke-width="1.300"/><path d="M577 605h5M579.500 602.500v5" stroke="#445" stroke-width="1.300"/>
      <path d="M606 609l5 5" stroke="#d89850" stroke-width="2.600"/><circle cx="602.500" cy="605" r="5" fill="#eef3f9" stroke="#8a96a8" stroke-width="1.300"/><path d="M600 605h5" stroke="#445" stroke-width="1.300"/>
      <path d="M619 608c0-3 3-5.500 6.500-5l5.500 2.500c2 2.500 1.500 6.500-1 8.500l-5 .5c-3.500-.5-6-3-6-6.500z" fill="#f4dcc0" stroke="#8a6444" stroke-width="1.100"/>
      <path d="M619.500 609.500l5 1.500M621 612.500l4.500-.5" stroke="#8a6444" stroke-width=".9" fill="none"/>
      <path d="M628 601.500h7M631.500 598v7" stroke="#2458b0" stroke-width="1.300"/><path d="M630 599.500l1.500-1.500 1.500 1.500M630 603.500l1.500 1.500 1.500-1.500M629.500 600l-1.500 1.500 1.500 1.500M633.500 600l1.500 1.500-1.500 1.500" stroke="#2458b0" stroke-width=".9" fill="none"/>
      <!-- slider -->
      <path d="M860.500 602v7M866 602v7l-5-3.500z" fill="#a02818" stroke="#a02818" stroke-width="1"/>
      <path d="M975.500 602v7M969 602v7l5-3.500z" fill="#e81010" stroke="#e81010" stroke-width="1"/>
      <rect x="882" y="604.500" width="73" height="3" rx="1.500" fill="#e4e4e4"/>
      <path d="M888 598h10v14l-5 4-5-4z" fill="#1a7ad8"/>
    </svg>
  </div>
</div>
</body>
</html>
